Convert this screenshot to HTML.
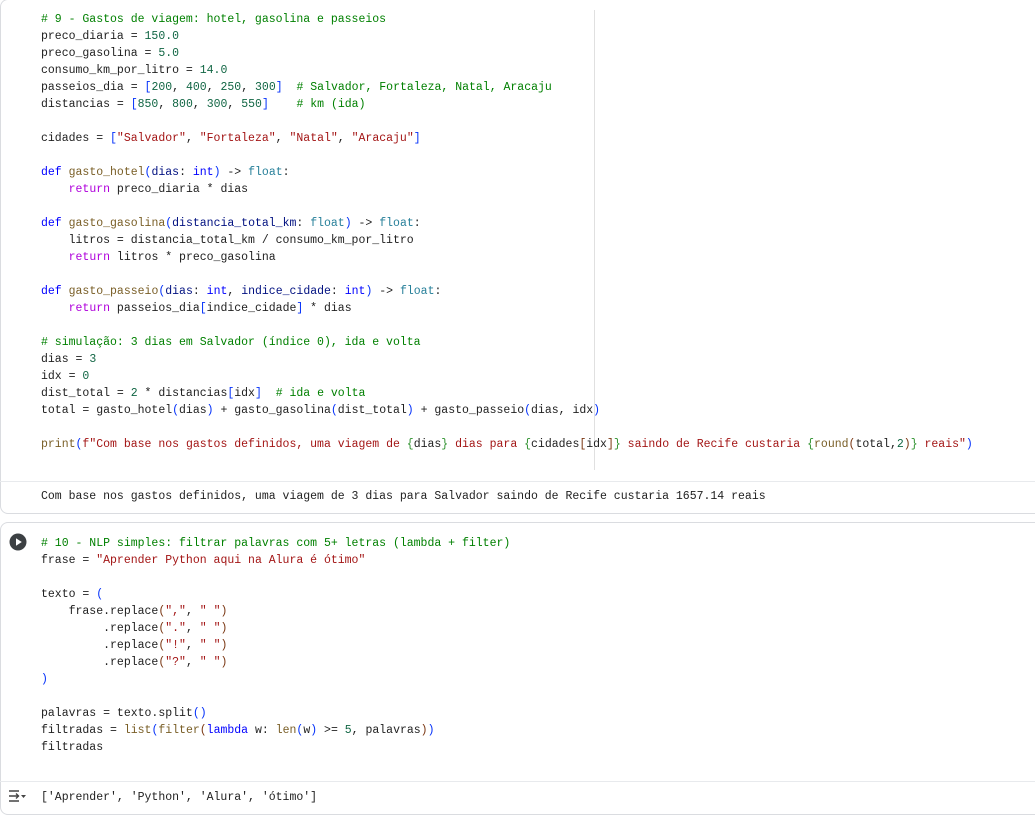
<!DOCTYPE html>
<html><head><meta charset="utf-8"><style>
body{margin:0;width:1035px;height:817px;background:#fff;position:relative;overflow:hidden;font-family:"Liberation Mono",monospace;}
.cell{position:absolute;left:0;width:1060px;border:1px solid #dadce0;border-radius:8px;background:#fff;}
pre{margin:0;position:absolute;left:41px;font-family:"Liberation Mono",monospace;font-size:11.5px;line-height:17px;color:#212121;white-space:pre;}
.c{color:#008000}.n{color:#116644}.s{color:#a31515}.k{color:#0000ff}.r{color:#af00db}.f{color:#795e26}.p{color:#001080}.t{color:#267f99}.b{color:#0431fa}.g{color:#319331}.o{color:#7b3814}
.sep{position:absolute;left:0;right:0;height:1px;background:#e8eaed}
.ruler{position:absolute;left:594px;width:1px;background:#e0e0e0}
</style></head><body>
<div class="cell" style="top:-1px;height:513px;"></div>
<div class="ruler" style="top:10px;height:460px"></div>
<pre style="top:11px"><span class="c"># 9 - Gastos de viagem: hotel, gasolina e passeios</span>
preco_diaria = <span class="n">150.0</span>
preco_gasolina = <span class="n">5.0</span>
consumo_km_por_litro = <span class="n">14.0</span>
passeios_dia = <span class="b">[</span><span class="n">200</span>, <span class="n">400</span>, <span class="n">250</span>, <span class="n">300</span><span class="b">]</span>  <span class="c"># Salvador, Fortaleza, Natal, Aracaju</span>
distancias = <span class="b">[</span><span class="n">850</span>, <span class="n">800</span>, <span class="n">300</span>, <span class="n">550</span><span class="b">]</span>    <span class="c"># km (ida)</span>

cidades = <span class="b">[</span><span class="s">"Salvador"</span>, <span class="s">"Fortaleza"</span>, <span class="s">"Natal"</span>, <span class="s">"Aracaju"</span><span class="b">]</span>

<span class="k">def</span> <span class="f">gasto_hotel</span><span class="b">(</span><span class="p">dias</span>: <span class="k">int</span><span class="b">)</span> -&gt; <span class="t">float</span>:
    <span class="r">return</span> preco_diaria * dias

<span class="k">def</span> <span class="f">gasto_gasolina</span><span class="b">(</span><span class="p">distancia_total_km</span>: <span class="t">float</span><span class="b">)</span> -&gt; <span class="t">float</span>:
    litros = distancia_total_km / consumo_km_por_litro
    <span class="r">return</span> litros * preco_gasolina

<span class="k">def</span> <span class="f">gasto_passeio</span><span class="b">(</span><span class="p">dias</span>: <span class="k">int</span>, <span class="p">indice_cidade</span>: <span class="k">int</span><span class="b">)</span> -&gt; <span class="t">float</span>:
    <span class="r">return</span> passeios_dia<span class="b">[</span>indice_cidade<span class="b">]</span> * dias

<span class="c"># simulação: 3 dias em Salvador (índice 0), ida e volta</span>
dias = <span class="n">3</span>
idx = <span class="n">0</span>
dist_total = <span class="n">2</span> * distancias<span class="b">[</span>idx<span class="b">]</span>  <span class="c"># ida e volta</span>
total = gasto_hotel<span class="b">(</span>dias<span class="b">)</span> + gasto_gasolina<span class="b">(</span>dist_total<span class="b">)</span> + gasto_passeio<span class="b">(</span>dias, idx<span class="b">)</span>

<span class="f">print</span><span class="b">(</span><span class="s">f"Com base nos gastos definidos, uma viagem de </span><span class="g">{</span>dias<span class="g">}</span><span class="s"> dias para </span><span class="g">{</span>cidades<span class="o">[</span>idx<span class="o">]</span><span class="g">}</span><span class="s"> saindo de Recife custaria </span><span class="g">{</span><span class="f">round</span><span class="o">(</span>total,<span class="n">2</span><span class="o">)</span><span class="g">}</span><span class="s"> reais"</span><span class="b">)</span></pre>
<div class="sep" style="top:481px"></div>
<pre style="top:488px">Com base nos gastos definidos, uma viagem de 3 dias para Salvador saindo de Recife custaria 1657.14 reais</pre>

<div class="cell" style="top:522px;height:291px;"></div>
<svg style="position:absolute;left:9px;top:533px" width="18" height="18" viewBox="0 0 18 18"><circle cx="9" cy="9" r="8.5" fill="#3c4043"/><path d="M7 5.2 L12.8 9 L7 12.8 Z" fill="#fff"/></svg>
<pre style="top:535px"><span class="c"># 10 - NLP simples: filtrar palavras com 5+ letras (lambda + filter)</span>
frase = <span class="s">"Aprender Python aqui na Alura é ótimo"</span>

texto = <span class="b">(</span>
    frase.replace<span class="o">(</span><span class="s">","</span>, <span class="s">" "</span><span class="o">)</span>
         .replace<span class="o">(</span><span class="s">"."</span>, <span class="s">" "</span><span class="o">)</span>
         .replace<span class="o">(</span><span class="s">"!"</span>, <span class="s">" "</span><span class="o">)</span>
         .replace<span class="o">(</span><span class="s">"?"</span>, <span class="s">" "</span><span class="o">)</span>
<span class="b">)</span>

palavras = texto.split<span class="b">()</span>
filtradas = <span class="f">list</span><span class="b">(</span><span class="f">filter</span><span class="o">(</span><span class="k">lambda</span> w: <span class="f">len</span><span class="b">(</span>w<span class="b">)</span> &gt;= <span class="n">5</span>, palavras<span class="o">)</span><span class="b">)</span>
filtradas</pre>
<div class="sep" style="top:781px"></div>
<svg style="position:absolute;left:8px;top:789px" width="18" height="14" viewBox="0 0 18 14"><g stroke="#444" stroke-width="1.4" fill="none"><path d="M1 2H11M1 7H11M1 12H11M8 4.5L10.5 7L8 9.5"/></g><path d="M13 6H18L15.5 9Z" fill="#444"/></svg>
<pre style="top:789px">['Aprender', 'Python', 'Alura', 'ótimo']</pre>
</body></html>
